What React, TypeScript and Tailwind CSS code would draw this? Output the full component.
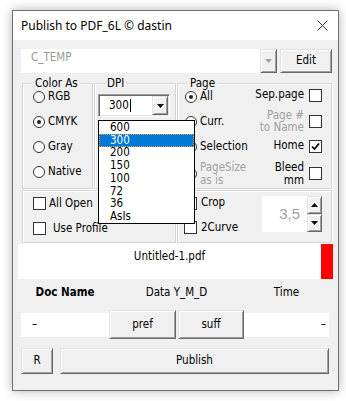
import React from "react";

const raised =
  "bg-[#f0f0f0] border border-t-[#e3e3e3] border-l-[#e3e3e3] border-b-[#696969] border-r-[#696969] shadow-[inset_1px_1px_0_#fff,inset_-1px_-1px_0_#a0a0a0]";
const groupBox = "relative border border-[#d5d5d5] shadow-[inset_1px_1px_0_#fff,1px_1px_0_#fff]";

const Radio = ({ checked }: { checked?: boolean }) => (
  <span className="flex h-[12px] w-[12px] shrink-0 items-center justify-center rounded-full border-[1.5px] border-[#333] bg-white">
    {checked && <span className="h-[4px] w-[4px] rounded-full bg-[#222]" />}
  </span>
);

const Check = ({ checked }: { checked?: boolean }) => (
  <span className="flex h-[13px] w-[13px] shrink-0 items-center justify-center border border-[#333] bg-white">
    {checked && (
      <svg width="9" height="9" viewBox="0 0 9 9">
        <path d="M1 4.5 L3.5 7 L8 1.5" stroke="#000" strokeWidth="1.7" fill="none" />
      </svg>
    )}
  </span>
);

const Arrow = ({ color = "#000", up }: { color?: string; up?: boolean }) => (
  <svg width="7" height="4" viewBox="0 0 7 4">
    <path d={up ? "M0 4 L3.5 0 L7 4 Z" : "M0 0 L7 0 L3.5 4 Z"} fill={color} />
  </svg>
);

const Legend = ({ text }: { text: string }) => (
  <span className="absolute -top-[7px] left-[10px] bg-[#f0f0f0] px-[2px] leading-[13px]">{text}</span>
);

const dpiList = ["600", "300", "200", "150", "100", "72", "36", "AsIs"];

export default function App() {
  return (
    <div className="h-[401px] w-[346px] overflow-hidden bg-white pl-[12px] pt-[10px] font-['DejaVu_Sans_Condensed','Liberation_Sans',sans-serif] text-[11.5px] text-black">
      <div className="flex h-[381px] w-[327px] flex-col border border-[#707070] bg-[#f0f0f0] shadow-[0_0_10px_rgba(0,0,0,0.3)]">
        {/* title bar */}
        <div className="flex h-[29px] shrink-0 items-center justify-between bg-white pl-[8px] pr-[10px]">
          <span className="font-['Noto_Sans',sans-serif] text-[12px]">Publish to PDF_6L © dastin</span>
          <svg width="11" height="11" viewBox="0 0 11 11">
            <path d="M0.5 0.5 L10.5 10.5 M10.5 0.5 L0.5 10.5" stroke="#222" strokeWidth="0.9" />
          </svg>
        </div>

        <div className="flex flex-1 flex-col pl-[8px] pr-[5px]">
          {/* folder combo */}
          <div className="mt-[9px] flex h-[24px]">
            <div className="w-[239px] bg-white pl-[10px] pt-[2px] leading-[13px] text-[#9a9a9a]">C_TEMP</div>
            <div className={`flex w-[17px] items-center justify-center ${raised}`}>
              <Arrow color="#a0a0a0" />
            </div>
            <button className={`ml-[3px] w-[52px] ${raised}`}>Edit</button>
          </div>

          {/* upper groups */}
          <div className="mt-[10px] flex h-[106px] gap-[1px] pl-[1px]">
            <div className={`${groupBox} w-[71px]`}>
              <Legend text="Color As" />
              <div className="flex flex-col pl-[10px]">
                {["RGB", "CMYK", "Gray", "Native"].map((c) => (
                  <div key={c} className="flex h-[25px] items-center gap-[3px]">
                    <Radio checked={c === "CMYK"} />
                    <span>{c}</span>
                  </div>
                ))}
              </div>
            </div>

            <div className={`${groupBox} w-[82px]`}>
              <Legend text="DPI" />
              <div className="relative ml-[3px] mt-[10px] w-[72px]">
                <div className="flex h-[23px] border border-t-[#a0a0a0] border-l-[#a0a0a0] border-b-white border-r-white bg-white shadow-[inset_1px_1px_0_#696969,inset_-1px_-1px_0_#e3e3e3]">
                  <div className="flex flex-1 items-center pl-[10px]">
                    <span>300</span>
                    <span className="ml-[1px] h-[13px] w-[1px] bg-black" />
                  </div>
                  <div className={`m-[1px] flex w-[16px] items-center justify-center ${raised}`}>
                    <Arrow />
                  </div>
                </div>
                <div className="absolute left-0 top-[26px] z-10 w-[97px] border border-black bg-white">
                  {dpiList.map((d) => (
                    <div
                      key={d}
                      className={
                        d === "300"
                          ? "flex h-[12.75px] items-center border border-dotted border-[#e8a33c] bg-[#0078d7] pl-[10px] text-white"
                          : "flex h-[12.75px] items-center pl-[11px]"
                      }
                    >
                      {d}
                    </div>
                  ))}
                </div>
              </div>
            </div>

            <div className={`${groupBox} w-[155px]`}>
              <Legend text="Page" />
              <div className="grid grid-cols-[1fr_auto] pl-[7px] pr-[9px]">
                <div className="flex h-[25px] items-center gap-[3px]">
                  <Radio checked />
                  <span>All</span>
                </div>
                <div className="flex h-[25px] items-center justify-end gap-[5px] pb-[3px]">
                  <span>Sep.page</span>
                  <Check />
                </div>
                <div className="flex h-[25px] items-center gap-[3px]">
                  <Radio />
                  <span>Curr.</span>
                </div>
                <div className="flex h-[25px] items-center justify-end gap-[5px] pb-[1px]">
                  <span className="text-right leading-[12.5px] text-[#a0a0a0]">
                    Page #<br />
                    to Name
                  </span>
                  <Check />
                </div>
                <div className="flex h-[25px] items-center gap-[3px]">
                  <Radio />
                  <span>Selection</span>
                </div>
                <div className="flex h-[25px] items-center justify-end gap-[5px] pb-[1px]">
                  <span>Home</span>
                  <Check checked />
                </div>
                <div className="flex h-[29px] items-center gap-[3px]">
                  <Radio />
                  <span className="leading-[13px] text-[#a0a0a0]">
                    PageSize
                    <br />
                    as is
                  </span>
                </div>
                <div className="flex h-[29px] items-center justify-end gap-[5px]">
                  <span className="text-right leading-[13px]">
                    Bleed
                    <br />
                    mm
                  </span>
                  <Check />
                </div>
              </div>
            </div>
          </div>

          {/* lower groups */}
          <div className="mt-[1px] flex h-[53px] gap-[1px] pl-[1px]">
            <div className={`${groupBox} flex w-[154px] flex-col pl-[10px]`}>
              <div className="flex h-[25px] items-center gap-[3px]">
                <Check />
                <span>All Open</span>
              </div>
              <div className="flex h-[25px] items-center gap-[7px]">
                <Check />
                <span>Use Profile</span>
              </div>
            </div>
            <div className={`${groupBox} flex w-[155px] justify-between pl-[6px] pr-[9px]`}>
              <div className="flex flex-col">
                <div className="flex h-[24px] items-center gap-[4px]">
                  <Check />
                  <span>Crop</span>
                </div>
                <div className="flex h-[25px] items-center gap-[4px]">
                  <Check />
                  <span>2Curve</span>
                </div>
              </div>
              <div className="mt-[5px] flex h-[36px]">
                <div className="flex w-[45px] items-center justify-end bg-white pr-[7px] font-['Liberation_Sans',sans-serif] text-[15px] text-[#a0a0a0]">
                  3,5
                </div>
                <div className="flex w-[15px] flex-col">
                  <div className={`flex h-[18px] items-center justify-center ${raised}`}>
                    <Arrow up />
                  </div>
                  <div className={`flex h-[18px] items-center justify-center ${raised}`}>
                    <Arrow />
                  </div>
                </div>
              </div>
            </div>
          </div>

          {/* file name */}
          <div className="-ml-[3px] mt-[1px] flex h-[35px]">
            <div className="flex-1 bg-white pt-[6px] text-center leading-[13px]">Untitled-1.pdf</div>
            <div className="w-[12px] bg-[#ff0000]" />
          </div>

          {/* labels */}
          <div className="flex h-[28px] items-center">
            <span className="w-[88px] text-center font-bold">Doc Name</span>
            <span className="w-[135px] text-center">Data Y_M_D</span>
            <span className="w-[85px] text-center">Time</span>
          </div>

          {/* name parts */}
          <div className="mt-[3px] flex h-[29px] items-center">
            <div className="flex h-[24px] w-[88px] items-center bg-white pl-[11px]">–</div>
            <button className={`h-[29px] w-[67px] ${raised}`}>pref</button>
            <button className={`ml-[2px] h-[29px] w-[66px] ${raised}`}>suff</button>
            <div className="flex h-[24px] w-[85px] items-center justify-end bg-white pr-[3px]">–</div>
          </div>

          {/* actions */}
          <div className="mt-[9px] flex h-[26px]">
            <button className={`w-[32px] ${raised}`}>R</button>
            <button className={`ml-[7px] w-[269px] ${raised}`}>Publish</button>
          </div>
        </div>
      </div>
    </div>
  );
}
